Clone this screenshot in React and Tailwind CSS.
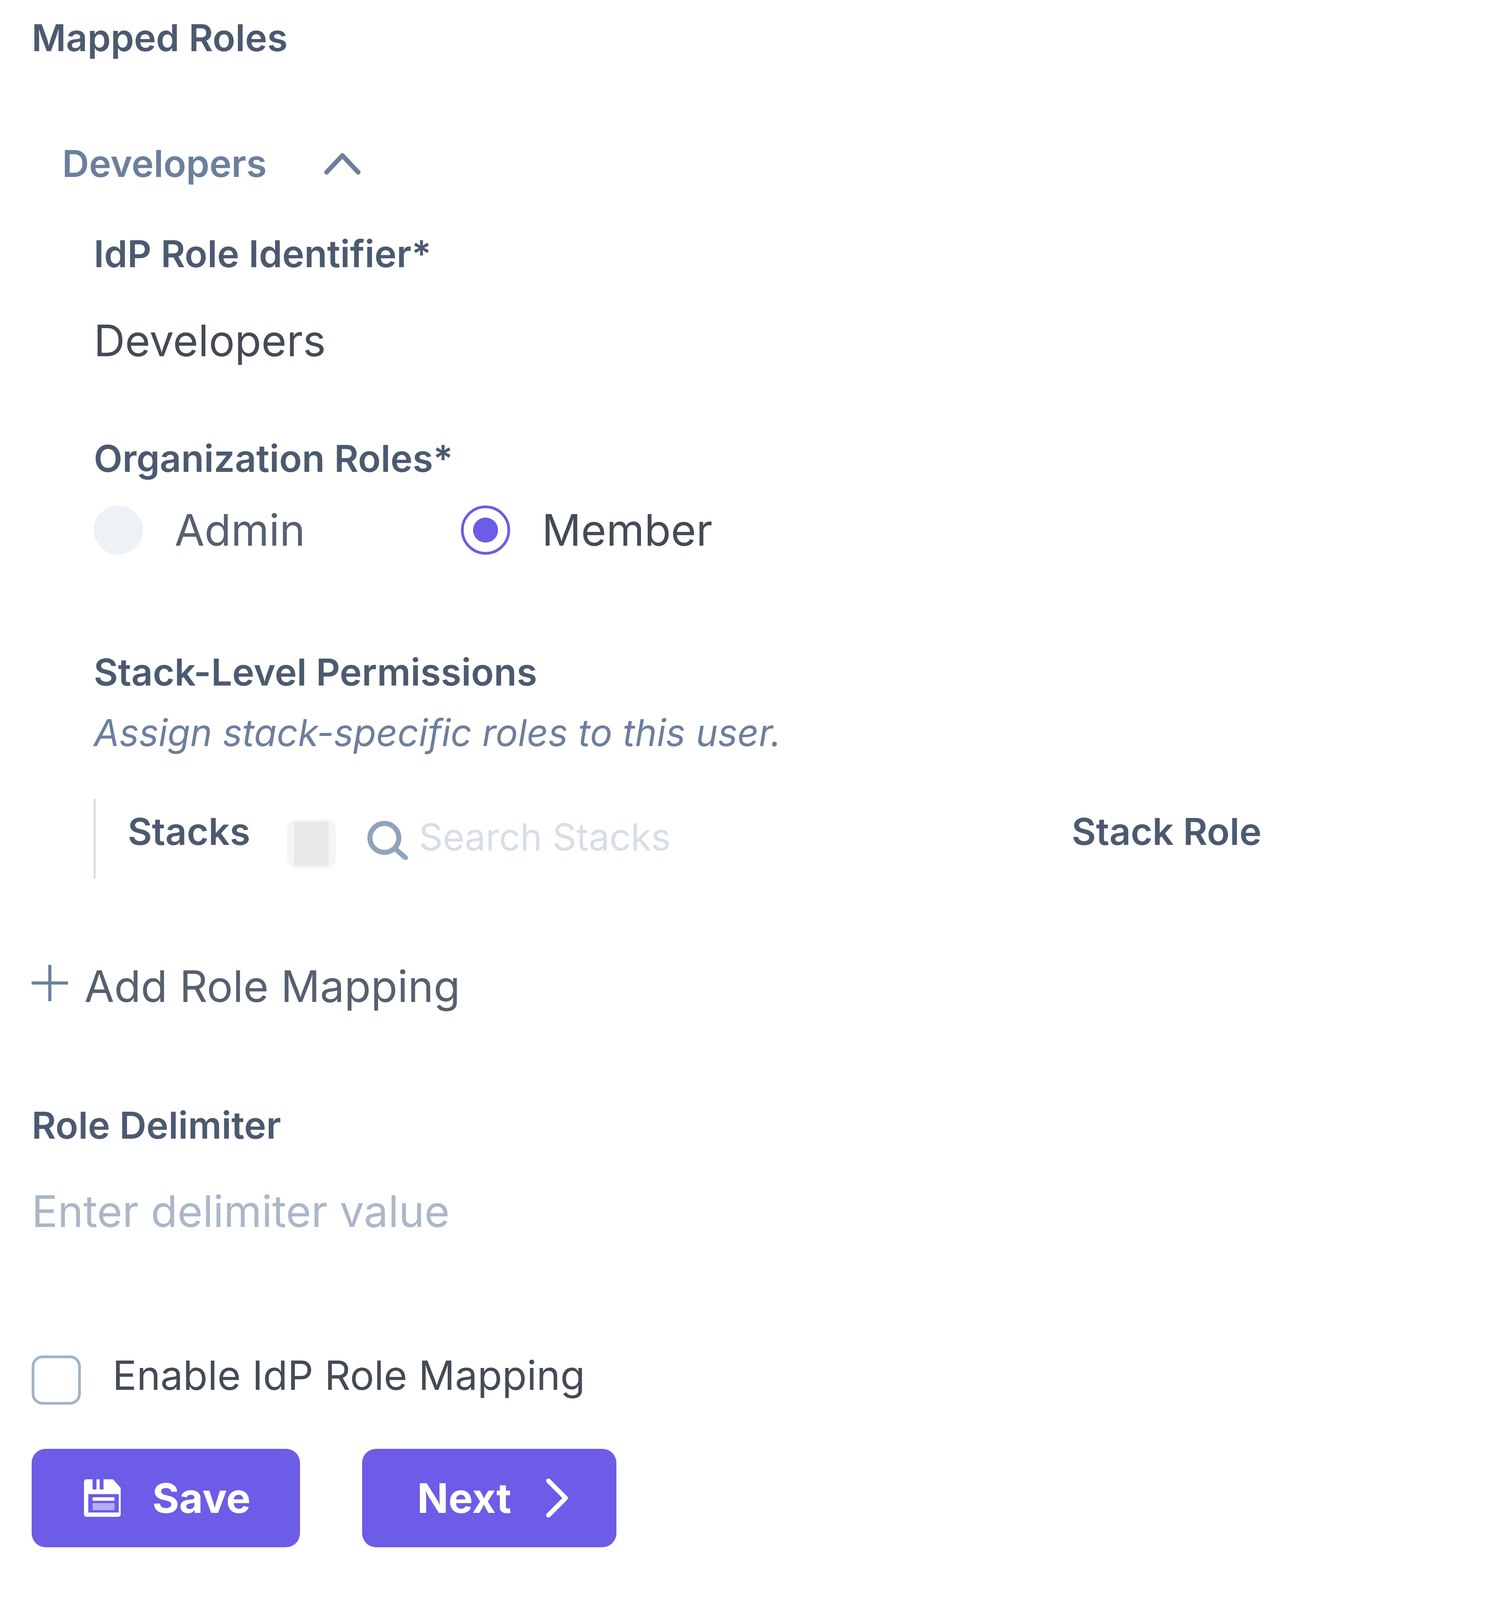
const labelClass = "text-[95.5px] leading-[140px] font-semibold text-[#4b5a70]";

const SaveIcon = () => (
  <svg viewBox="0 0 100 100" className="w-[100px] h-[100px] shrink-0">
    <path fill="#fff" d="M6 2h16v26h10V2h8v26h10V2h24l20 22v68a6 6 0 0 1-6 6H6a6 6 0 0 1-6-6V8a6 6 0 0 1 6-6z" />
    <rect x="11" y="40" width="78" height="47" fill="#6c5ce7" />
    <rect x="22" y="48" width="56" height="9" fill="#fff" />
    <rect x="22" y="63" width="56" height="18" fill="#b5aef3" />
  </svg>
);

const App = () => {
  return (
    <div className="w-[3840px] min-h-screen bg-white pl-[81px] pt-[26px] font-['Inter',sans-serif]">
      <div className={labelClass}>Mapped Roles</div>

      <div className="mt-[182px] ml-[78px] flex items-center">
        <span className="text-[95.5px] leading-[140px] font-semibold text-[#6c7f9c]">Developers</span>
        <svg viewBox="0 0 93 57" className="ml-[147px] w-[93px] h-[57px]" fill="none" stroke="#6c7f9c" strokeWidth="12" strokeLinecap="round" strokeLinejoin="round">
          <path d="M6 51 46.5 8 87 51" />
        </svg>
      </div>

      <div className="ml-[159px]">
        <div className={`mt-[91px] ${labelClass}`}>IdP Role Identifier*</div>
        <div className="mt-[83px] text-[111px] leading-[140px] text-[#444b55]">Developers</div>

        <div className={`mt-[161px] ${labelClass}`}>Organization Roles*</div>
        <div className="mt-[51px] flex items-center h-[126px]">
          <span className="w-[126px] h-[126px] rounded-full bg-[#edf2f7]" />
          <span className="ml-[81px] text-[111px] leading-[140px] text-[#566070]">Admin</span>
          <span className="ml-[399px] w-[126px] h-[126px] rounded-full border-[7px] border-[#6c5ce7] bg-white flex items-center justify-center">
            <span className="w-[64px] h-[64px] rounded-full bg-[#6c5ce7]" />
          </span>
          <span className="ml-[81px] text-[111px] leading-[140px] text-[#444b55]">Member</span>
        </div>

        <div className={`mt-[230px] ${labelClass}`}>Stack-Level Permissions</div>
        <div className="mt-[16px] text-[95px] leading-[140px] italic text-[#6c7f9c]">Assign stack-specific roles to this user.</div>

        <div className="mt-[99px] h-[204px] flex items-start border-l-[5px] border-[#d5dce6] pl-[82px]">
          <span className={`mt-[13px] ${labelClass}`}>Stacks</span>
          <span className="mt-[52px] ml-[93px] w-[126px] h-[126px] rounded-[28px] bg-[#f5f5f5] flex items-center justify-center shrink-0">
            <span className="w-[88px] h-[112px] bg-[#e8e8e8]" />
          </span>
          <svg viewBox="0 0 104 100" className="mt-[56px] ml-[80px] w-[104px] h-[100px] shrink-0" fill="none" stroke="#8fa3bb" strokeWidth="13" strokeLinecap="round">
            <circle cx="44" cy="44" r="37" />
            <path d="M72 72 98 95" />
          </svg>
          <span className="mt-[28px] ml-[29px] w-[1671px] text-[95px] leading-[140px] text-[#d8dee6]">Search Stacks</span>
          <span className={`mt-[13px] ${labelClass}`}>Stack Role</span>
        </div>
      </div>

      <div className="mt-[206px] flex items-center h-[140px]">
        <svg viewBox="0 0 93 93" className="w-[93px] h-[93px] -mt-[18px]" fill="none" stroke="#6c7f9c" strokeWidth="8">
          <path d="M46.5 0v93M0 46.5h93" />
        </svg>
        <span className="ml-[42px] text-[111px] leading-[140px] text-[#566070]">Add Role Mapping</span>
      </div>

      <div className={`mt-[215px] ${labelClass}`}>Role Delimiter</div>
      <div className="mt-[81px] text-[111px] leading-[140px] text-[#a9b7c9]">Enter delimiter value</div>

      <div className="mt-[299px] flex items-start h-[126px]">
        <span className="w-[126px] h-[126px] rounded-[28px] border-[7px] border-[#a3b3c7] bg-white shrink-0" />
        <span className="ml-[81px] -mt-[19px] text-[103px] leading-[140px] text-[#444b55]">Enable IdP Role Mapping</span>
      </div>

      <div className="mt-[113px] flex gap-[159px]">
        <button className="w-[687px] h-[252px] rounded-[36px] bg-[#6c5ce7] flex items-center pl-[134px] text-white text-[105px] font-bold">
          <SaveIcon />
          <span className="ml-[75px]">Save</span>
        </button>
        <button className="w-[651px] h-[252px] rounded-[36px] bg-[#6c5ce7] flex items-center pl-[141px] text-white text-[105px] font-bold">
          <span>Next</span>
          <svg viewBox="0 0 60 100" className="ml-[87px] w-[60px] h-[100px]" fill="none" stroke="#fff" strokeWidth="12" strokeLinecap="round" strokeLinejoin="round">
            <path d="M8 6 52 50 8 94" />
          </svg>
        </button>
      </div>
    </div>
  );
};

export default App;
